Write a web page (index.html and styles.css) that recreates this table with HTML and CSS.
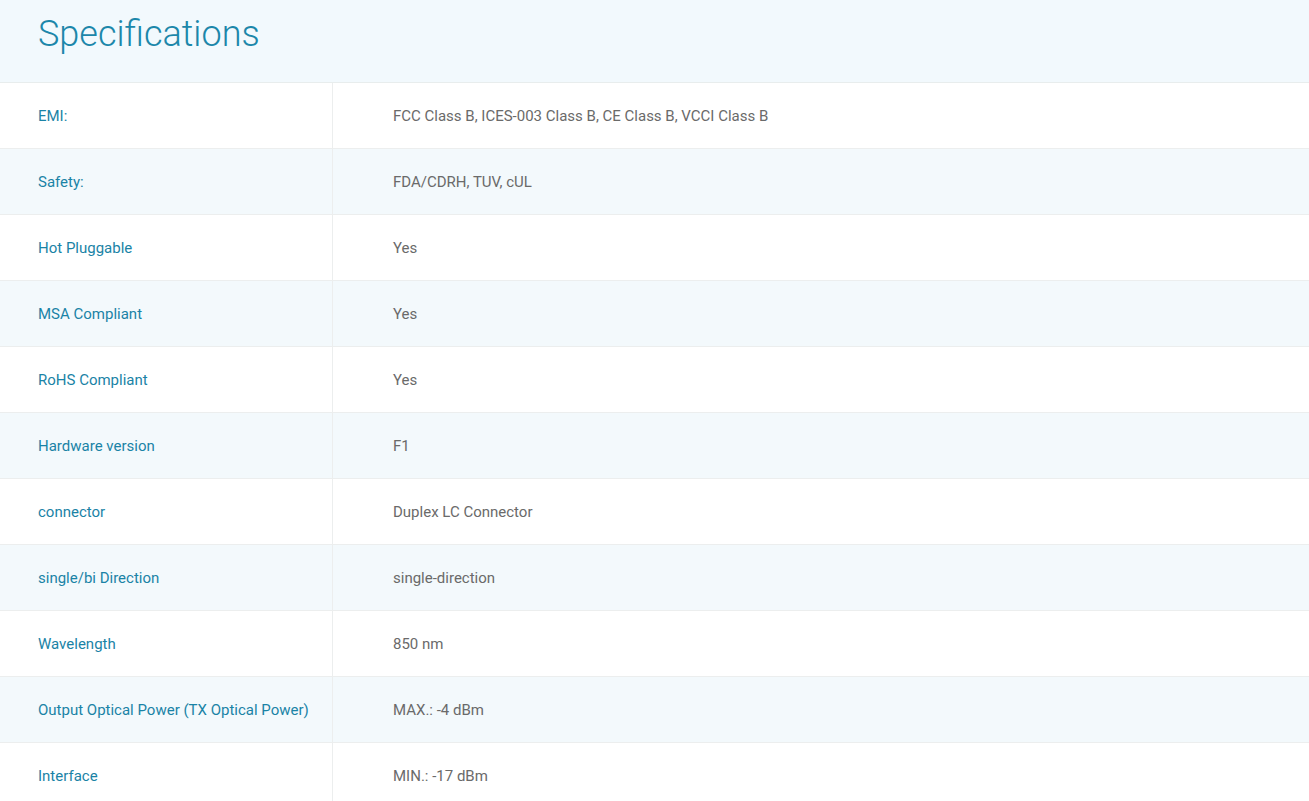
FILE: index.html
```html
<!DOCTYPE html>
<html>
<head>
<meta charset="utf-8">
<link rel="stylesheet" href="styles.css">
</head>
<body>
<section class="specs">
  <header class="specs-head"><h2 class="specs-title">Specifications</h2></header>
  <div class="specs-table">
    <div class="row"><div class="key">EMI:</div><div class="val">FCC Class B, ICES-003 Class B, CE Class B, VCCI Class B</div></div>
    <div class="row alt"><div class="key">Safety:</div><div class="val">FDA/CDRH, TUV, cUL</div></div>
    <div class="row"><div class="key">Hot Pluggable</div><div class="val">Yes</div></div>
    <div class="row alt"><div class="key">MSA Compliant</div><div class="val">Yes</div></div>
    <div class="row"><div class="key">RoHS Compliant</div><div class="val">Yes</div></div>
    <div class="row alt"><div class="key">Hardware version</div><div class="val">F1</div></div>
    <div class="row"><div class="key">connector</div><div class="val">Duplex LC Connector</div></div>
    <div class="row alt"><div class="key">single/bi Direction</div><div class="val">single-direction</div></div>
    <div class="row"><div class="key">Wavelength</div><div class="val">850 nm</div></div>
    <div class="row alt"><div class="key">Output Optical Power (TX Optical Power)</div><div class="val">MAX.: -4 dBm</div></div>
    <div class="row"><div class="key">Interface</div><div class="val">MIN.: -17 dBm</div></div>
  </div>
</section>
</body>
</html>
```
FILE: styles.css
```css
html, body {
  margin: 0;
  padding: 0;
  background: #ffffff;
  font-family: Roboto, "Liberation Sans", Arial, sans-serif;
}
.specs {
  width: 100%;
}
.specs-head {
  height: 82px;
  background: #f2f9fd;
  border-bottom: 1px solid #e8eded;
  display: flex;
  align-items: center;
  padding-left: 38px;
}
.specs-title {
  margin: 0;
  font-weight: 300;
  font-size: 36px;
  color: #1c87aa;
  line-height: 1;
  position: relative;
  top: -7px;
}
.specs-table {
  display: flex;
  flex-direction: column;
}
.row {
  display: grid;
  grid-template-columns: 333px 1fr;
  height: 65px;
  border-bottom: 1px solid #eceeee;
  font-size: 15px;
}
.row.alt {
  background: #f3f9fc;
}
.key {
  display: flex;
  align-items: center;
  padding-left: 38px;
  color: #1a83a6;
  border-right: 1px solid #eceeee;
}
.val {
  display: flex;
  align-items: center;
  padding-left: 60px;
  color: #6a6a6a;
}
```
